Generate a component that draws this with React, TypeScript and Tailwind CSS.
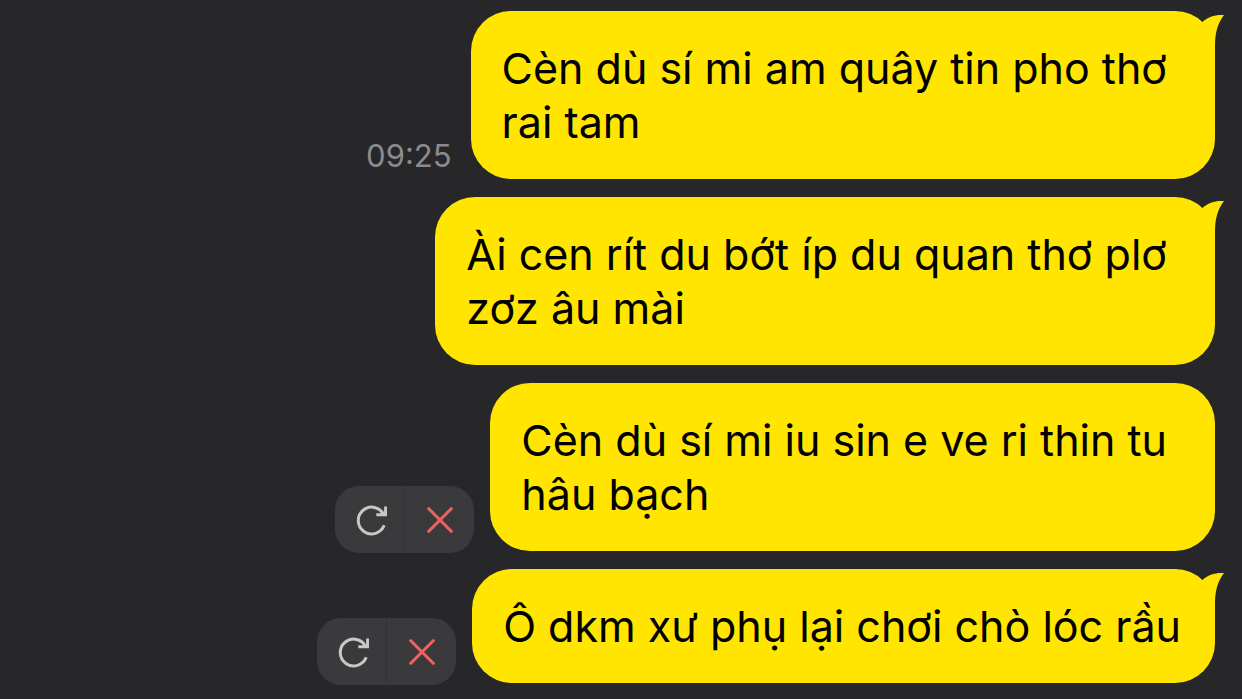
interface Message {
  id: number;
  lines: string[];
  tail: boolean;
  time?: string;
  failed?: boolean;
}

const MESSAGES: Message[] = [
  { id: 1, lines: ["Cèn dù sí mi am quây tin pho thơ", "rai tam"], tail: true, time: "09:25" },
  { id: 2, lines: ["Ài cen rít du bớt íp du quan thơ plơ", "zơz âu mài"], tail: true },
  { id: 3, lines: ["Cèn dù sí mi iu sin e ve ri thin tu", "hâu bạch"], tail: false, failed: true },
  { id: 4, lines: ["Ô dkm xư phụ lại chơi chò lóc rầu"], tail: true, failed: true },
];

function RetryIcon() {
  return (
    <svg width="34" height="34" viewBox="0 0 34 34" fill="none" stroke="#c7c7c7" strokeWidth="3" aria-hidden="true">
      <path d="M31.2 22.3A13.4 13.4 0 1 1 30.8 11.8" />
      <path d="M32.6 3.6v8.2h-9.3" />
    </svg>
  );
}

function CloseIcon() {
  return (
    <svg width="28" height="28" viewBox="0 0 28 28" fill="none" stroke="#f0625d" strokeWidth="3" aria-hidden="true">
      <path d="M1.8 1.8l24.4 24.4M26.2 1.8l-24.4 24.4" />
    </svg>
  );
}

function FailedActions() {
  return (
    <div className="-mb-[2px] mr-4 flex h-[67px] shrink-0 overflow-hidden rounded-3xl bg-[#3a3a3c]">
      <button type="button" aria-label="Resend" className="flex w-[70px] items-center justify-center border-r border-[#323234]">
        <RetryIcon />
      </button>
      <button type="button" aria-label="Delete" className="flex w-[69px] items-center justify-center">
        <CloseIcon />
      </button>
    </div>
  );
}

function Bubble({ lines, tail }: { lines: string[]; tail: boolean }) {
  return (
    <div
      className={`relative rounded-[40px] bg-[#ffe500] py-[30px] pl-[31px] text-[43px] leading-[54px] text-black ${
        lines.length > 1 ? "pr-[48px]" : "pr-[34px]"
      }`}
    >
      {lines.map((line) => (
        <p key={line} className="whitespace-nowrap">{line}</p>
      ))}
      {tail && (
        <svg className="absolute -right-[9px] top-0 text-[#ffe500]" width="40" height="44" viewBox="0 0 40 44" aria-hidden="true">
          <path d="M18.500 11C24 5.500 31 3.500 40 4C34 12 31 21 31 34V44L14 24Z" fill="currentColor" />
        </svg>
      )}
    </div>
  );
}

export default function App() {
  return (
    <main className="min-h-screen bg-[#272729] pb-4 pr-[27px] pt-[11px] font-['Inter',sans-serif]">
      <ul className="flex flex-col gap-[18px]">
        {MESSAGES.map((message) => (
          <li key={message.id} className="flex items-end justify-end">
            {message.time && (
              <time className="mb-1 mr-[19px] text-[31px] leading-[38px] text-[#8b8b8d]">{message.time}</time>
            )}
            {message.failed && <FailedActions />}
            <Bubble lines={message.lines} tail={message.tail} />
          </li>
        ))}
      </ul>
    </main>
  );
}
